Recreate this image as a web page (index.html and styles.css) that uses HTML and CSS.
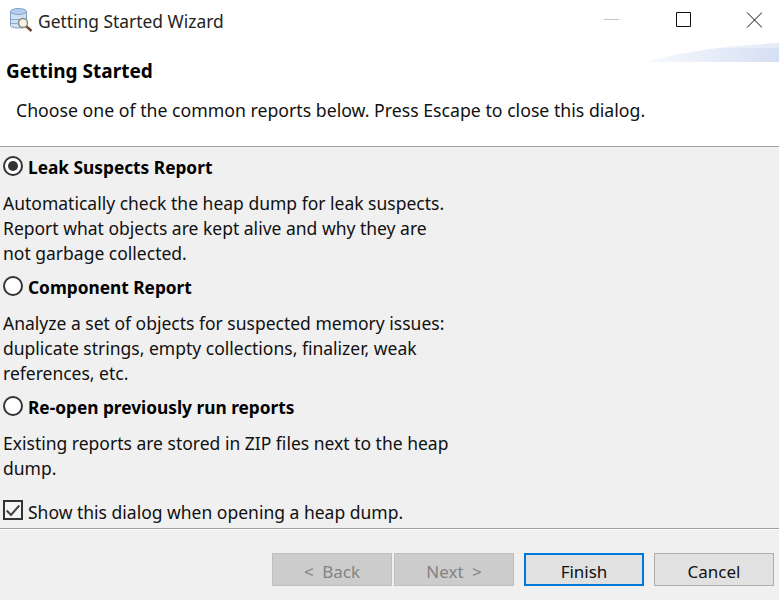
FILE: index.html
```html
<!DOCTYPE html>
<html lang="en">
<head>
    <meta charset="UTF-8">
    <meta name="viewport" content="width=device-width, initial-scale=1.0">
    <title>Getting Started Wizard</title>
    <link rel="stylesheet" href="styles.css">
</head>
<body>

    <div class="dialog">
        <div class="titlebar">
            <svg class="app-icon" width="24" height="24" viewBox="0 0 24 24">
                <path d="M1.500 3.500v14c0 1.500 3.500 2.500 8 2.500s8-1 8-2.500v-14z" fill="#cfe0f3" stroke="#7f9fc4"/>
                <ellipse cx="9.500" cy="3.500" rx="8" ry="3" fill="#b4cdea" stroke="#7f9fc4"/>
                <path d="M1.500 11.500h10M1.500 15.500h7" stroke="#8dabcd" fill="none"/>
                <circle cx="14" cy="15" r="4.500" fill="#f5f2e4" stroke="#8c8a7c" stroke-width="1.500"/>
                <path d="M17.500 18.500l5 4.500" stroke="#6d4a35" stroke-width="2.500"/>
            </svg>
            <span class="title-text">Getting Started Wizard</span>
            <div class="window-buttons">
                <svg width="16" height="16" viewBox="0 0 16 16"><path d="M0 7.500h15" stroke="#c4c4c4"/></svg>
                <svg width="16" height="16" viewBox="0 0 16 16"><path d="M1.500.500h14v14h-14z" fill="none" stroke="#111"/></svg>
                <svg width="16" height="16" viewBox="0 0 16 16"><path d="M1 .5l15 15M16 .5l-15 15" fill="none" stroke="#111"/></svg>
            </div>
        </div>

        <div class="banner">
            <div class="banner-art"></div>
            <h1>Getting Started</h1>
            <p class="banner-text">Choose one of the common reports below. Press Escape to close this dialog.</p>
        </div>

        <div class="content">
            <div class="option">
                <label class="option-label"><span class="radio checked"></span>Leak Suspects Report</label>
                <p>Automatically check the heap dump for leak suspects. Report what objects are kept alive and why they are not garbage collected.</p>
            </div>
            <div class="option">
                <label class="option-label"><span class="radio"></span>Component Report</label>
                <p>Analyze a set of objects for suspected memory issues: duplicate strings, empty collections, finalizer, weak references, etc.</p>
            </div>
            <div class="option">
                <label class="option-label"><span class="radio"></span>Re-open previously run reports</label>
                <p>Existing reports are stored in ZIP files next to the heap dump.</p>
            </div>
            <label class="show-again">
                <svg class="checkbox" width="20" height="20" viewBox="0 0 20 20">
                    <path d="M1 1h18v18H1z" fill="#f6f6f6" stroke="#333" stroke-width="2"/>
                    <path d="M3.700 10.500l4.300 4.500 8.300-9.500" fill="none" stroke="#444" stroke-width="2"/>
                </svg>
                Show this dialog when opening a heap dump.
            </label>
        </div>

        <div class="footer">
            <button disabled>&lt; Back</button>
            <button class="next" disabled>Next &gt;</button>
            <button class="finish">Finish</button>
            <button class="cancel">Cancel</button>
        </div>
    </div>

</body>
</html>
```

FILE: styles.css
```css
* {
    margin: 0;
    padding: 0;
    box-sizing: border-box;
}

body {
    font-family: 'Noto Sans', sans-serif;
    font-size: 17.5px;
    color: #111;
    background: #f0f0f0;
}

.dialog {
    width: 779px;
    height: 600px;
    display: flex;
    flex-direction: column;
    overflow: hidden;
}

/* Title bar */
.titlebar {
    height: 42px;
    background: #fff;
    display: flex;
    align-items: center;
    padding-left: 9px;
}

.app-icon {
    margin-right: 5px;
    margin-top: -2px;
}

.title-text {
    color: #222;
    font-size: 17.4px;
}

.window-buttons {
    margin-left: auto;
    display: flex;
    gap: 55px;
    padding-right: 17px;
    margin-top: -2px;
}

/* Banner */
.banner {
    position: relative;
    height: 105px;
    background: #fff;
    border-bottom: 1px solid #a0a0a0;
    padding: 16px 6px 0;
}

.banner-art {
    position: absolute;
    top: 0;
    right: 0;
    width: 131px;
    height: 20px;
    background:
        linear-gradient(rgba(255, 255, 255, 0.35) 6px, transparent 6px),
        linear-gradient(90deg, #f7f9fd, #d5dff3);
    clip-path: path('M0 20 Q 40 6 131 1 V20 Z');
}

h1 {
    font-size: 19px;
    font-weight: 700;
    color: #000;
    line-height: 26px;
}

.banner-text {
    margin: 14px 0 0 10px;
    font-size: 17.7px;
    line-height: 25px;
}

/* Report options */
.content {
    flex: 1;
    padding: 8px 3px 0;
    border-bottom: 1px solid #a0a0a0;
}

.option {
    width: 450px;
    line-height: 25px;
    height: 120px;
}

.option-label {
    display: flex;
    align-items: center;
    font-size: 17.3px;
    font-weight: 700;
    height: 25px;
    color: #000;
    margin-bottom: 11px;
}

.radio {
    width: 20px;
    height: 20px;
    border: 2px solid #333;
    border-radius: 50%;
    background: #fff;
    margin-right: 5px;
    margin-top: -4px;
    position: relative;
}

.radio.checked::after {
    content: '';
    position: absolute;
    top: 3px;
    left: 3px;
    width: 10px;
    height: 10px;
    border-radius: 50%;
    background: #333;
}

.show-again {
    display: flex;
    align-items: center;
    gap: 5px;
    margin-top: -15px;
    line-height: 25px;
}

.checkbox {
    margin-top: -6px;
}

/* Button row */
.footer {
    height: 71px;
    border-top: 1px solid #fff;
    display: flex;
    align-items: flex-start;
    padding: 23px 5px 0 272px;
}

button {
    width: 120px;
    height: 33px;
    padding-top: 3px;
    font-family: inherit;
    font-size: 17px;
    word-spacing: 4px;
    color: #111;
    background: #e1e1e1;
    border: 1px solid #adadad;
}

button:disabled {
    background: #ccc;
    border-color: #bfbfbf;
    color: #838383;
}

.next {
    margin-left: 2px;
}

.finish {
    margin-left: 10px;
    border: 2px solid #0078d7;
}

.cancel {
    margin-left: 10px;
}
```
